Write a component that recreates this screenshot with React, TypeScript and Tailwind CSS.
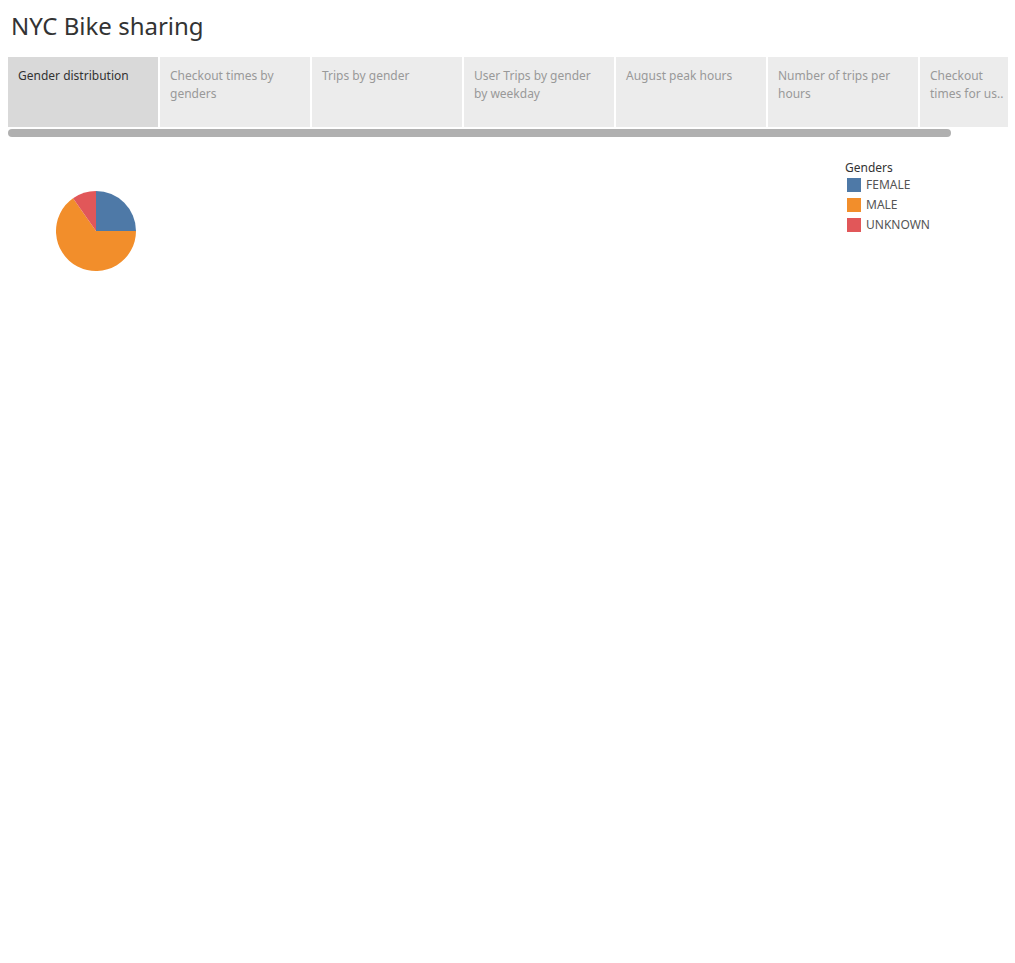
import React from 'react';

// ── Data ──────────────────────────────────────────────────────────────────────
const TABS = [
  'Gender distribution',
  'Checkout times by genders',
  'Trips by gender',
  'User Trips by gender by weekday',
  'August peak hours',
  'Number of trips per hours',
];

const GENDERS = [
  { label: 'FEMALE', color: 'bg-[#4e79a7]' },
  { label: 'MALE', color: 'bg-[#f28e2b]' },
  { label: 'UNKNOWN', color: 'bg-[#e15759]' },
];

// angle measured clockwise from 12 o'clock
function point(cx: number, cy: number, r: number, deg: number) {
  const rad = ((deg - 90) * Math.PI) / 180;
  return [cx + r * Math.cos(rad), cy + r * Math.sin(rad)];
}

function slice(start: number, end: number) {
  const [x1, y1] = point(40, 40, 40, start);
  const [x2, y2] = point(40, 40, 40, end);
  const large = end - start > 180 ? 1 : 0;
  return `M40 40 L${x1} ${y1} A40 40 0 ${large} 1 ${x2} ${y2} Z`;
}

function GenderPie() {
  return (
    <svg width="80" height="80" viewBox="0 0 80 80">
      <path d={slice(0, 90)} fill="#4e79a7" />
      <path d={slice(90, 325)} fill="#f28e2b" />
      <path d={slice(325, 360)} fill="#e15759" />
    </svg>
  );
}

export default function App() {
  return (
    <div
      className="w-[1015px] h-[963px] bg-white overflow-hidden text-[#333]"
      style={{ fontFamily: '"Noto Sans", "Open Sans", sans-serif' }}
    >
      {/* ── Title ───────────────────────────────────────────────────────── */}
      <h1 className="pl-[11px] pt-[10px] h-[57px] text-[24px] leading-[32px] text-[#333]">
        NYC Bike sharing
      </h1>

      {/* ── Tab strip ───────────────────────────────────────────────────── */}
      <div className="pl-[8px] w-[1008px] overflow-hidden">
        <div className="flex gap-[2px] w-[1300px]">
          {TABS.map((tab, i) => (
            <div
              key={tab}
              className={
                i === 0
                  ? 'w-[150px] h-[70px] shrink-0 bg-[#d9d9d9] text-[#333] px-[10px] pt-[10px] text-[12px] leading-[18px]'
                  : 'w-[150px] h-[70px] shrink-0 bg-[#ececec] text-[#999] px-[10px] pt-[10px] text-[12px] leading-[18px]'
              }
            >
              {tab}
            </div>
          ))}
          <div className="w-[88px] h-[70px] shrink-0 bg-[#ececec] text-[#999] pl-[10px] pt-[10px] text-[12px] leading-[18px] whitespace-nowrap">
            Checkout
            <br />
            times for us..
          </div>
        </div>
        {/* scrollbar */}
        <div className="mt-[2px] w-[943px] h-[8px] rounded-full bg-[#b0b0b0]" />
      </div>

      {/* ── Chart area ──────────────────────────────────────────────────── */}
      <div className="flex justify-between pt-[21px]">
        <div className="pl-[56px] pt-[33px]">
          <GenderPie />
        </div>
        <div className="w-[170px]">
          <div className="text-[12px] leading-[20px] text-[#333]">Genders</div>
          <div className="flex flex-col gap-[6px] pl-[2px]">
            {GENDERS.map((g) => (
              <div key={g.label} className="flex items-center gap-[5px] h-[14px]">
                <span className={`w-[14px] h-[14px] ${g.color}`} />
                <span className="text-[12px] leading-[14px] text-[#555]">{g.label}</span>
              </div>
            ))}
          </div>
        </div>
      </div>
    </div>
  );
}
